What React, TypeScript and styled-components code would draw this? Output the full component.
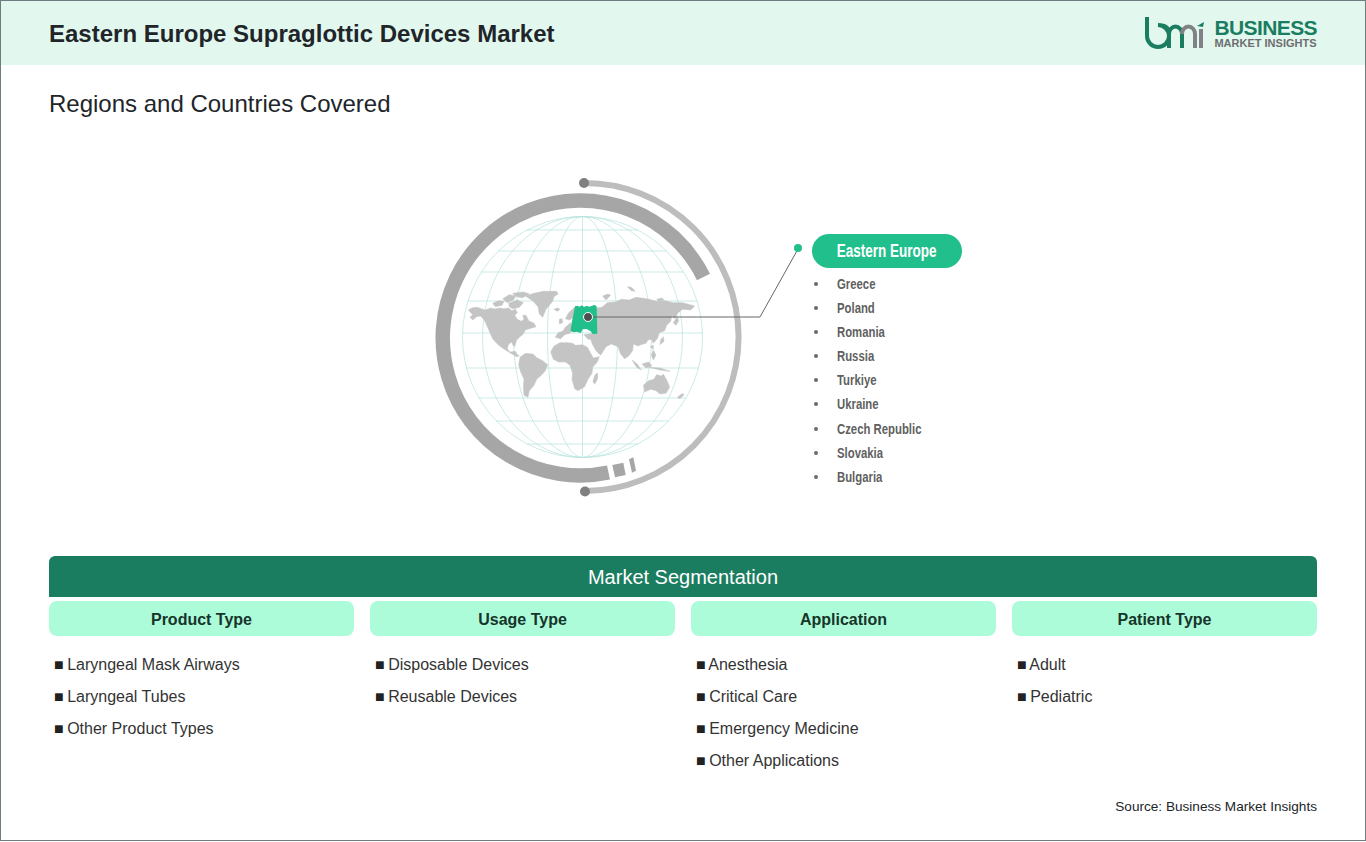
import React from 'react';
import styled, { createGlobalStyle } from 'styled-components';

const GlobalStyle = createGlobalStyle`
  html, body {
    margin: 0;
    padding: 0;
    background: #fff;
    font-family: "Liberation Sans", Arial, sans-serif;
  }
`;

const Page = styled.div`
  box-sizing: border-box;
  width: 1366px;
  height: 841px;
  border: 1px solid #6f7c80;
  background: #fff;
  display: flex;
  flex-direction: column;
`;

const Header = styled.header`
  height: 64px;
  flex: none;
  background: #e2f8ef;
  padding: 0 48px;
  display: flex;
  align-items: center;
  justify-content: space-between;
`;

const Title = styled.h1`
  margin: 2px 0 0;
  font-size: 24px;
  font-weight: 700;
  color: #212529;
`;

const Logo = styled.div`
  display: flex;
  align-items: center;
  gap: 9px;
`;

const LogoText = styled.div`
  display: flex;
  flex-direction: column;
  font-weight: 700;
`;

const LogoTop = styled.span`
  font-size: 21px;
  letter-spacing: -0.6px;
  line-height: 19px;
  color: #1b7d5f;
`;

const LogoBottom = styled.span`
  font-size: 11px;
  line-height: 12px;
  color: #6d6e71;
`;

const SubTitle = styled.h2`
  margin: 25px 48px 0;
  font-size: 24px;
  line-height: 28px;
  font-weight: 400;
  color: #212529;
`;

const Diagram = styled.section`
  height: 386px;
  margin-top: 52px;
  padding-left: 419px;
  display: flex;
  align-items: flex-start;
`;

const Globe = styled.svg`
  width: 390px;
  height: 330px;
  flex: none;
  display: block;
`;

const Regions = styled.div`
  margin: 64px 0 0 2px;
  width: 150px;
`;

const Pill = styled.div`
  height: 34px;
  border-radius: 17px;
  background: #21bf8c;
  color: #fff;
  font-size: 18px;
  font-weight: 700;
  line-height: 35px;
  text-align: center;
`;

const PillLabel = styled.span`
  display: inline-block;
  transform: scaleX(0.75);
  white-space: nowrap;
`;

const Countries = styled.ul`
  list-style: none;
  margin: 4px 0 0;
  padding: 0;
`;

const Country = styled.li`
  height: 24.1px;
  line-height: 24px;
  padding-left: 25px;
  position: relative;
  font-size: 14px;
  font-weight: 700;
  color: #5f5f5f;
  white-space: nowrap;

  &::before {
    content: '';
    position: absolute;
    left: 2px;
    top: 10px;
    width: 4px;
    height: 4px;
    border-radius: 50%;
    background: #6a6a6a;
  }
`;

const CountryLabel = styled.span`
  display: inline-block;
  transform: scaleX(0.81);
  transform-origin: left center;
`;

const Segmentation = styled.section`
  margin: 0 48px;
`;

const SegmentBar = styled.div`
  height: 41px;
  border-radius: 6px 6px 0 0;
  background: #1b7d5f;
  color: #fff;
  font-size: 20px;
  line-height: 43px;
  text-align: center;
`;

const Columns = styled.div`
  display: grid;
  grid-template-columns: repeat(4, 305px);
  column-gap: 16px;
  margin-top: 4px;
`;

const ColumnHead = styled.div`
  height: 35px;
  border-radius: 8px;
  background: #adfcd9;
  color: #16352b;
  font-size: 16px;
  font-weight: 700;
  line-height: 38px;
  text-align: center;
`;

const Items = styled.ul`
  list-style: none;
  margin: 13px 0 0;
  padding: 0 0 0 5px;
`;

const Item = styled.li`
  height: 32px;
  font-size: 16px;
  line-height: 32px;
  color: #333;
`;

const Square = styled.span`
  color: #222;
  margin-right: -1px;
`;

const Source = styled.div`
  margin: auto 48px 25px;
  font-size: 13.6px;
  line-height: 16px;
  text-align: right;
  color: #212529;
`;

const segments = [
  { name: 'Product Type', items: ['Laryngeal Mask Airways', 'Laryngeal Tubes', 'Other Product Types'] },
  { name: 'Usage Type', items: ['Disposable Devices', 'Reusable Devices'] },
  { name: 'Application', items: ['Anesthesia', 'Critical Care', 'Emergency Medicine', 'Other Applications'] },
  { name: 'Patient Type', items: ['Adult', 'Pediatric'] },
];

const countries = ['Greece', 'Poland', 'Romania', 'Russia', 'Turkiye', 'Ukraine', 'Czech Republic', 'Slovakia', 'Bulgaria'];

const parallels = [230, 251, 272, 301, 333, 368, 398, 421, 444];
const meridians = [120, 100, 69, 35];

const CX = 582.5;
const CY = 337;
const R = 120.5;

function GlobeGrid() {
  return (
    <g fill="none" stroke="#b4e2dc" strokeWidth="0.7">
      {meridians.map((rx) => (
        <ellipse key={rx} cx={CX} cy={CY} rx={rx} ry={R} />
      ))}
      <line x1={CX} y1={CY - R} x2={CX} y2={CY + R} />
      {parallels.map((y) => {
        const half = Math.sqrt(R * R - (y - CY) * (y - CY));
        return <line key={y} x1={CX - half} y1={y} x2={CX + half} y2={y} />;
      })}
    </g>
  );
}

const land = [
  // north america
  'M25 90 L38 83 L52 82 L64 86 L76 90 L92 84 L104 87 L118 84 L132 86 L146 84 L156 92 L166 88 L172 98 L164 106 L172 118 L184 124 L192 118 L188 106 L198 106 L206 122 L222 130 L228 140 L208 146 L196 150 L190 162 L180 170 L170 180 L164 200 L158 194 L156 186 L146 192 L142 206 L150 216 L166 214 L172 224 L178 228 L170 230 L156 222 L140 212 L124 202 L110 190 L98 176 L90 158 L82 140 L74 122 L62 108 L50 110 L38 120 L30 112 L38 104 Z',
  // arctic islands
  'M98 70 L116 62 L132 64 L126 76 L106 80 Z M128 56 L148 44 L168 48 L160 60 L142 68 Z M158 40 L190 36 L208 42 L186 54 L166 48 Z M146 70 L172 60 L190 68 L178 82 L158 86 L148 80 Z',
  // greenland
  'M196 48 L222 40 L250 34 L290 34 L294 42 L282 50 L278 64 L258 88 L248 112 L238 102 L234 80 L218 62 Z',
  'M282 88 L292 84 L300 88 L292 94 Z M298 118 L306 116 L308 128 L298 132 Z',
  // south america
  'M180 232 L196 220 L218 222 L232 234 L248 242 L263 254 L256 272 L244 286 L230 298 L222 316 L208 332 L204 352 L192 346 L190 322 L192 298 L182 276 L176 254 Z',
  // africa
  'M272 216 L282 198 L300 188 L322 188 L338 190 L346 196 L368 194 L382 202 L392 220 L400 234 L418 230 L412 246 L398 262 L396 280 L384 298 L374 320 L354 332 L344 326 L336 298 L338 280 L330 256 L316 246 L296 246 L280 238 Z',
  'M405 284 L413 279 L413 296 L404 313 L399 304 Z',
  // europe west of the highlight
  'M286 172 L294 158 L308 154 L316 142 L332 128 L338 150 L330 160 L314 164 L302 176 Z',
  'M316 116 L326 98 L344 82 L348 92 L338 114 L328 120 Z',
  'M372 164 L410 158 L412 176 L384 178 Z',
  // russia north islands
  'M502 20 L514 22 L526 34 L514 32 Z M428 48 L444 42 L452 46 L438 60 Z M590 58 L606 54 L612 60 L596 64 Z',
  // asia
  'M409 84 L426 82 L442 68 L466 66 L484 58 L508 60 L528 52 L560 56 L590 64 L616 62 L640 68 L668 68 L704 78 L692 90 L668 88 L654 98 L644 116 L636 106 L632 124 L620 136 L614 152 L598 158 L592 176 L580 190 L574 178 L564 180 L558 190 L542 194 L534 198 L520 192 L518 212 L506 228 L494 236 L482 222 L474 200 L454 192 L438 200 L422 226 L408 212 L398 194 L392 178 L409 162 Z',
  // far east and the islands
  'M640 128 L652 110 L656 122 L648 136 Z M602 180 L610 170 L612 184 L600 194 Z M570 200 L580 196 L580 208 Z M516 240 L532 252 L544 270 L530 262 Z M546 252 L566 246 L576 258 L558 264 Z M566 262 L600 264 L630 274 L600 270 Z M580 210 L588 226 L580 240 L574 226 Z',
  // australia
  'M550 316 L566 302 L582 298 L590 284 L604 288 L610 282 L622 304 L629 322 L618 340 L600 342 L588 332 L572 328 L554 336 Z',
  'M652 352 L668 340 L672 344 L660 356 Z',
];

const easternEurope =
  'M345 79 L352 77 L358 80 L366 76 L372 81 L380 77 L388 80 L396 77 L404 75 L410 79 L412 161 L398 162 L392 154 L380 147 L368 148 L362 159 L350 155 L340 157 L332 152 L335 128 L340 104 Z';

function BmiMark() {
  return (
    <svg width="60" height="34" viewBox="0 0 60 34" fill="none">
      <path d="M2 1 V20 A11 11 0 1 0 13 9 C20 9 24 12 24 18 V32" stroke="#1b7d5f" strokeWidth="4" />
      <path d="M24 18 A6.5 7.5 0 0 1 37 18 V32" stroke="#1b7d5f" strokeWidth="4" />
      <path d="M37 18 A6.5 7.5 0 0 1 50 18 V32" stroke="#808285" strokeWidth="4" />
      <path d="M56 13 V32" stroke="#808285" strokeWidth="4" />
      <path d="M52 10 L59 6 L58 11 Z" fill="#1b7d5f" />
    </svg>
  );
}

export default function App() {
  return (
    <Page>
      <GlobalStyle />
      <Header>
        <Title>Eastern Europe Supraglottic Devices Market</Title>
        <Logo>
          <BmiMark />
          <LogoText>
            <LogoTop>BUSINESS</LogoTop>
            <LogoBottom>MARKET INSIGHTS</LogoBottom>
          </LogoText>
        </Logo>
      </Header>
      <SubTitle>Regions and Countries Covered</SubTitle>
      <Diagram>
        <Globe viewBox="420 170 390 330">
          <GlobeGrid />
          <path d="M703.5 277 A137.5 137.5 0 1 0 608.5 472.5" fill="none" stroke="#a6a6a6" strokeWidth="14.5" />
          <path d="M612.3 465 L623.3 462.7 L625.7 475 L615 477.3 Z" fill="#a6a6a6" />
          <path d="M629 459.3 L633.3 457.3 L636 470.7 L632 472.7 Z" fill="#a6a6a6" />
          <path d="M584 183 A154 154 0 1 1 585 491" fill="none" stroke="#bdbdbd" strokeWidth="6" />
          <circle cx="584" cy="183" r="5" fill="#808080" />
          <circle cx="585" cy="491.5" r="5" fill="#808080" />
          <g transform="translate(460 280) scale(0.3333)">
            {land.map((d) => (
              <path key={d} d={d} fill="#c4c4c4" stroke="#c4c4c4" strokeWidth="1.5" strokeLinejoin="round" />
            ))}
            <path d={easternEurope} fill="#21bf8c" />
          </g>
          <path d="M588 317 H760 L798 249" fill="none" stroke="#666" strokeWidth="1" />
          <circle cx="798" cy="248" r="4" fill="#21bf8c" />
          <circle cx="588" cy="317" r="4.5" fill="#4d4d4d" stroke="#fff" strokeWidth="1" />
        </Globe>
        <Regions>
          <Pill>
            <PillLabel>Eastern Europe</PillLabel>
          </Pill>
          <Countries>
            {countries.map((c) => (
              <Country key={c}>
                <CountryLabel>{c}</CountryLabel>
              </Country>
            ))}
          </Countries>
        </Regions>
      </Diagram>
      <Segmentation>
        <SegmentBar>Market Segmentation</SegmentBar>
        <Columns>
          {segments.map((s) => (
            <div key={s.name}>
              <ColumnHead>{s.name}</ColumnHead>
              <Items>
                {s.items.map((i) => (
                  <Item key={i}>
                    <Square>■</Square> {i}
                  </Item>
                ))}
              </Items>
            </div>
          ))}
        </Columns>
      </Segmentation>
      <Source>Source: Business Market Insights</Source>
    </Page>
  );
}
